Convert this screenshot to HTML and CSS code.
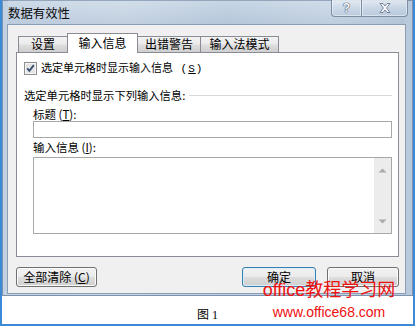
FILE: index.html
```html
<!DOCTYPE html>
<html>
<head>
<meta charset="utf-8">
<link rel="stylesheet" href="styles.css">
</head>
<body>
<div class="screen">
  <div class="window">
    <div class="titlebar">
      <span class="title">数据有效性</span>
      <div class="caption-btns">
        <span class="cbtn help">?</span>
        <span class="cbtn close">
          <svg width="12" height="10" viewBox="0 0 12 10"><path d="M1 0.5 H4 L6 3 L8 0.5 H11 L7.6 5 L11 9.5 H8 L6 7 L4 9.5 H1 L4.4 5 Z" fill="#f3f5f8" stroke="#5f6f84" stroke-width="0.8" stroke-linejoin="round"/></svg>
        </span>
      </div>
    </div>
    <div class="client">
      <div class="tabs">
        <div class="tab t1">设置</div>
        <div class="tab t2 active">输入信息</div>
        <div class="tab t3">出错警告</div>
        <div class="tab t4">输入法模式</div>
      </div>
      <div class="panel">
        <div class="check-row">
          <svg class="checkbox" width="13" height="13" viewBox="0 0 13 13">
            <rect x="0.5" y="0.5" width="12" height="12" fill="#f6f6f6" stroke="#8e8f8f"/>
            <rect x="2" y="2" width="9" height="9" fill="#e4e4e4"/>
            <path d="M3.2 6.4 L5.4 8.8 L9.8 3.2" stroke="#3b4f74" stroke-width="1.9" fill="none"/>
          </svg>
          <span class="label-sm">选定单元格时显示输入信息<span class="ak"> (<u>S</u>)</span></span>
        </div>
        <div class="group-head">
          <span>选定单元格时显示下列输入信息:</span>
          <span class="rule"></span>
        </div>
        <div class="indent">
          <div class="field-label">标题 (<u>T</u>):</div>
          <div class="textbox"></div>
          <div class="field-label second">输入信息 (<u>I</u>):</div>
          <div class="textarea">
            <div class="ta-body"></div>
            <div class="scrollbar">
              <svg width="9" height="5" viewBox="0 0 9 5"><path d="M0.5 4.5 L4.5 0.5 L8.5 4.5 Z" fill="#a9a9a9"/></svg>
              <svg width="9" height="5" viewBox="0 0 9 5"><path d="M0.5 0.5 L4.5 4.5 L8.5 0.5 Z" fill="#a9a9a9"/></svg>
            </div>
          </div>
        </div>
      </div>
      <div class="buttons">
        <button class="btn clear">全部清除 (<u>C</u>)</button>
        <span class="spacer"></span>
        <button class="btn ok">确定</button>
        <button class="btn cancel">取消</button>
      </div>
    </div>
  </div>
  <div class="caption">图 1</div>
  <div class="watermark">
    <div class="wm1">office教程学习网</div>
    <div class="wm2">www.office68.com</div>
  </div>
</div>
</body>
</html>
```
FILE: styles.css
```css
* { box-sizing: border-box; }
html, body { margin: 0; padding: 0; background: #fff; }
body {
  width: 415px;
  height: 327px;
  overflow: hidden;
  font-family: "Noto Sans CJK SC", "Liberation Sans", sans-serif;
  color: #000;
}
u { text-decoration: underline; }

.screen {
  position: relative;
  width: 415px;
  height: 326px;
  border: 2px solid #3a8ad8;
  border-top: 0;
  background: #fff;
}

.window {
  height: 296px;
  display: flex;
  flex-direction: column;
  padding: 0 8px 3px 6px;
  background: linear-gradient(90deg, #c3d2e3 0%, #cad7e6 30%, #bccde0 55%, #c7d5e5 80%, #b8c9dc 100%);
  box-shadow: inset 0 0 0 1px #7d93ad;
}

.titlebar {
  height: 25px;
  display: flex;
  align-items: flex-start;
  background: linear-gradient(180deg, rgba(255,255,255,0.18), rgba(120,145,175,0.12));
}
.title {
  margin-top: 5px;
  font-size: 12.4px;
  line-height: 16px;
  color: #0b0b0b;
}
.caption-btns {
  margin-left: auto;
  margin-right: -3px;
  display: flex;
}
.cbtn {
  height: 17px;
  display: flex;
  align-items: center;
  justify-content: center;
  border: 1px solid #7c8da3;
  border-top: 0;
  background: linear-gradient(180deg, rgba(255,255,255,0.45), rgba(210,222,236,0.35) 50%, rgba(180,198,220,0.5));
  box-shadow: inset 0 0 0 1px rgba(255,255,255,0.45);
}
.help {
  width: 30px;
  border-right: 0;
  border-bottom-left-radius: 4px;
  font-family: "Liberation Sans", sans-serif;
  font-weight: bold;
  font-size: 12px;
  color: #f3f5f8;
  text-shadow: 0 0 1px #4d5d72, 0 0 1px #4d5d72, 0 0 1px #4d5d72;
}
.close {
  width: 47px;
  border-bottom-right-radius: 4px;
}

.client {
  flex: 1;
  background: #f0f0f0;
  box-shadow: 0 0 0 1px #8a9db4;
  display: flex;
  flex-direction: column;
}

.tabs {
  display: flex;
  align-items: flex-end;
  height: 19px;
  margin-top: 8px;
  padding-left: 10px;
}
.tab {
  height: 16px;
  border: 1px solid #898c95;
  border-bottom: 0;
  font-size: 12px;
  line-height: 14px;
  text-align: center;
  background: linear-gradient(180deg, #f2f2f2 0%, #ebebeb 45%, #dddddd 55%, #cfcfcf 100%);
  margin-left: -1px;
}
.t1 { width: 50px; margin-left: 0; }
.t2 { width: 71px; }
.t3 { width: 64px; }
.t4 { width: 79px; }
.tab.active {
  position: relative;
  z-index: 1;
  height: 20px;
  margin-bottom: -1px;
  line-height: 17px;
  background: #fff;
}

.panel {
  height: 205px;
  margin: 0 6px 0 8px;
  border: 1px solid #898c95;
  background: #fff;
  padding: 7px 6px 0 7px;
}
.check-row {
  display: flex;
  align-items: center;
  height: 16px;
}
.checkbox { margin-right: 4px; flex: none; }
.label-sm { font-size: 11px; line-height: 16px; }
.ak {
  font-family: "Liberation Mono", monospace;
  font-size: 11px;
  letter-spacing: 1px;
}

.group-head {
  display: flex;
  align-items: center;
  height: 16px;
  margin-top: 11px;
  font-size: 11.3px;
}
.rule {
  flex: 1;
  height: 1px;
  margin-left: 4px;
  background: #d5d9de;
}

.indent { padding-left: 9px; }
.field-label {
  height: 14px;
  margin-top: 4px;
  font-size: 11.5px;
  line-height: 14px;
}
.field-label.second { margin-top: 2px; }
.textbox {
  height: 17px;
  border: 1px solid #a8a8a8;
  background: #fff;
}
.textarea {
  height: 77px;
  margin-top: 3px;
  border: 1px solid #a8a8a8;
  display: flex;
}
.ta-body { flex: 1; }
.scrollbar {
  width: 17px;
  background: #ececec;
  display: flex;
  flex-direction: column;
  align-items: center;
  justify-content: space-between;
  padding: 10px 0 9px;
}

.buttons {
  display: flex;
  height: 20px;
  margin-top: 10px;
  padding: 0 6px 0 8px;
}
.spacer { flex: 1; }
.btn {
  height: 20px;
  padding: 0;
  border: 1px solid #707070;
  border-radius: 3px;
  font-family: "Noto Sans CJK SC", "Liberation Sans", sans-serif;
  font-size: 12px;
  line-height: 16px;
  color: #000;
  background: linear-gradient(180deg, #f2f2f2 0%, #ebebeb 48%, #dddddd 52%, #cfcfcf 100%);
  box-shadow: inset 0 0 0 1px #fbfbfb;
}
.clear { width: 81px; }
.ok {
  width: 74px;
  border-color: #3c7fb1;
  box-shadow: inset 0 0 0 1px #d8eefb;
}
.cancel { width: 72px; margin-left: 11px; }

.caption {
  margin-top: 11px;
  text-align: center;
  font-family: "Liberation Serif", "Noto Sans CJK SC", serif;
  font-size: 12px;
  line-height: 16px;
}

.watermark {
  position: absolute;
  left: 257px;
  top: 280px;
  width: 140px;
  text-align: center;
  color: #ee1111;
  font-family: "Liberation Sans", "Noto Sans CJK SC", sans-serif;
}
.wm1 { font-size: 18px; line-height: 20px; }
.wm2 { font-size: 14px; line-height: 16px; margin-top: 4px; }
```
